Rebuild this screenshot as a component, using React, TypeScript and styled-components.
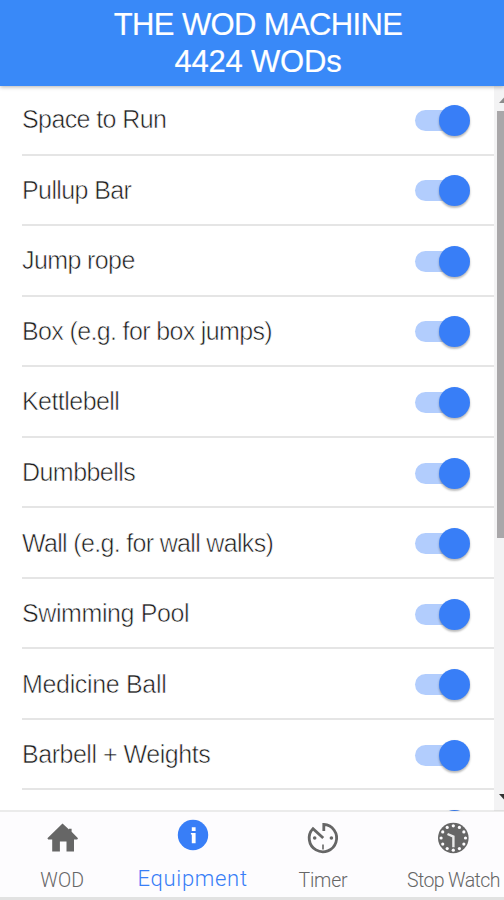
import React from "react";
import styled, { createGlobalStyle } from "styled-components";

const GlobalStyle = createGlobalStyle`
  * { box-sizing: border-box; }
  body { margin: 0; background: #fff; overflow: hidden; }
`;

const Screen = styled.div`
  display: flex;
  flex-direction: column;
  width: 504px;
  height: 900px;
  overflow: hidden;
  background: #fff;
  font-family: "Liberation Sans", Arial, sans-serif;
`;

const Header = styled.header`
  flex: none;
  height: 86px;
  padding: 6px 0 0 12px;
  background: #3989f8;
  color: #fff;
  box-shadow: 0 1px 4px rgba(0, 0, 0, 0.3);
  z-index: 1;
  display: flex;
  flex-direction: column;
  align-items: center;
`;

const TitleLine = styled.div<{ $spacing: number }>`
  font-size: 31px;
  line-height: 37px;
  white-space: nowrap;
  letter-spacing: ${(p) => p.$spacing}px;
  -webkit-text-stroke: 0.2px #fff;
`;

const Content = styled.main`
  flex: none;
  height: 725px;
  display: flex;
  overflow: hidden;
`;

const List = styled.ul`
  flex: none;
  list-style: none;
  width: 494px;
  margin: -1px 0 0;
  padding: 0 0 0 22px;
`;

const Row = styled.li`
  height: 70.55px;
  display: flex;
  align-items: center;
  justify-content: space-between;
  padding: 0 24px 0 0;
  border-bottom: 2px solid #e5e5e5;
`;

const Label = styled.span<{ $spacing: number }>`
  font-size: 25px;
  line-height: 30px;
  color: #1c1c1c;
  -webkit-text-stroke: 0.55px #fff;
  white-space: nowrap;
  letter-spacing: ${(p) => p.$spacing}px;
`;

const Track = styled.span`
  width: 55px;
  height: 21px;
  margin-top: 2px;
  display: flex;
  align-items: center;
  justify-content: flex-end;
  border-radius: 11px;
  background: linear-gradient(90deg, #b2cdfd 44px, transparent 44px);
`;

const Thumb = styled.span`
  flex: none;
  width: 31px;
  height: 31px;
  border-radius: 50%;
  background: #387ef7;
  box-shadow: 0 2px 2px rgba(0, 0, 0, 0.2), 0 1px 3px rgba(0, 0, 0, 0.12);
`;

const ScrollBar = styled.div`
  width: 18px;
  flex: none;
  display: flex;
  flex-direction: column;
  justify-content: space-between;
  background: #f3f3f4;
`;

const ScrollTop = styled.div`
  display: flex;
  flex-direction: column;
  padding: 11px 0 0 3px;
`;

const Arrow = styled.svg`
  display: block;
  width: 15px;
  height: 6px;
`;

const ScrollThumb = styled.div`
  width: 15px;
  height: 427px;
  margin-top: 8px;
  background: #a9a7a9;
`;

const ScrollBottom = styled.div`
  padding: 0 0 11px 3px;
`;

const TabBar = styled.nav`
  flex: none;
  height: 90px;
  margin-top: -1px;
  display: flex;
  background: #fdfcfe;
  background-clip: padding-box;
  border-top: 2px solid rgba(0, 0, 0, 0.08);
  border-bottom: 3px solid #e2e2e2;
`;

const Tab = styled.a<{ $active?: boolean }>`
  flex: none;
  width: 130.4px;
  display: flex;
  flex-direction: column;
  align-items: center;
  color: ${(p) => (p.$active ? "#387ef7" : "#666")};
  padding-top: ${(p) => (p.$active ? 6 : 9)}px;
  &:first-child { margin-left: -3px; }
`;

const TabIcon = styled.svg`
  display: block;
  width: 34px;
  height: 34px;
`;

const TabLabel = styled.span<{ $active?: boolean; $spacing: number }>`
  margin-top: ${(p) => (p.$active ? 14 : 13)}px;
  font-family: Roboto, sans-serif;
  font-weight: 300;
  font-size: ${(p) => (p.$active ? 22 : 19.5)}px;
  line-height: 26px;
  white-space: nowrap;
  color: ${(p) => (p.$active ? "#387ef7" : "#666")};
  letter-spacing: ${(p) => p.$spacing}px;
`;

const equipment: [string, number][] = [
  ["Space to Run", -0.6],
  ["Pullup Bar", -0.6],
  ["Jump rope", -0.6],
  ["Box (e.g. for box jumps)", -0.64],
  ["Kettlebell", -0.55],
  ["Dumbbells", -0.55],
  ["Wall (e.g. for wall walks)", -0.67],
  ["Swimming Pool", -0.4],
  ["Medicine Ball", -0.33],
  ["Barbell + Weights", -0.47],
  ["", 0],
];

const dial = (radius: number) =>
  Array.from({ length: 12 }, (_, i) => ({
    x: 17 + radius * Math.sin((i * Math.PI) / 6),
    y: 17 - radius * Math.cos((i * Math.PI) / 6),
  }));

const HomeIcon = () => (
  <TabIcon viewBox="0 0 34 34">
    <path
      d="M17.5 2.6 24 8.4V7.8h2.6v3L33 17.2l-.8 1.2H29V30.4h-7.5V20.4h-6.6v10H7.2v-12H3.2l-.8-1.2Z"
      fill="currentColor"
    />
  </TabIcon>
);

const InfoIcon = () => (
  <TabIcon viewBox="0 0 34 34">
    <circle cx="17" cy="17" r="15.2" fill="currentColor" />
    <path d="M15.8 9.2h3.8v3.9h-3.8zM14.9 15h4.7v10.2h-3.8v-8.6h-.9z" fill="#fff" />
  </TabIcon>
);

const TimerIcon = () => (
  <TabIcon viewBox="0 0 34 34">
    <path
      d="M17.8 10V3.4A13.7 13.7 0 1 1 7 7.6L17.2 17"
      fill="none"
      stroke="currentColor"
      strokeWidth="2.8"
      strokeLinejoin="miter"
    />
    <path d="M17 23.5v5" stroke="currentColor" strokeWidth="1.6" />
    <circle cx="8.7" cy="17" r="1.8" fill="currentColor" />
    <circle cx="25.4" cy="17" r="1.8" fill="currentColor" />
  </TabIcon>
);

const ClockIcon = () => (
  <TabIcon viewBox="0 0 34 34">
    <circle cx="17.3" cy="17" r="15.3" fill="currentColor" />
    {dial(12.2).map((p, i) => (
      <circle key={i} cx={p.x + 0.3} cy={p.y} r="1.6" fill="#fdfcfe" />
    ))}
    <path d="m11.5 13 5.9 2.6v10.6" fill="none" stroke="#e9e9e9" strokeWidth="2.4" />
  </TabIcon>
);

export default function App() {
  return (
    <>
      <GlobalStyle />
      <Screen>
        <Header>
          <TitleLine $spacing={-0.64}>THE WOD MACHINE</TitleLine>
          <TitleLine $spacing={-0.2}>4424 WODs</TitleLine>
        </Header>
        <Content>
          <List>
            {equipment.map(([name, spacing], i) => (
              <Row key={i}>
                <Label $spacing={spacing}>{name}</Label>
                <Track>
                  <Thumb />
                </Track>
              </Row>
            ))}
          </List>
          <ScrollBar>
            <ScrollTop>
              <Arrow viewBox="0 0 15 6"><path d="M2 6 7.5 0 13 6z" fill="#8b8b8b" /></Arrow>
              <ScrollThumb />
            </ScrollTop>
            <ScrollBottom>
              <Arrow viewBox="0 0 15 6"><path d="M2 0h11L7.5 6z" fill="#333" /></Arrow>
            </ScrollBottom>
          </ScrollBar>
        </Content>
        <TabBar>
          <Tab>
            <HomeIcon />
            <TabLabel $spacing={0.1}>WOD</TabLabel>
          </Tab>
          <Tab $active>
            <InfoIcon />
            <TabLabel $active $spacing={0.7}>Equipment</TabLabel>
          </Tab>
          <Tab>
            <TimerIcon />
            <TabLabel $spacing={-0.2}>Timer</TabLabel>
          </Tab>
          <Tab>
            <ClockIcon />
            <TabLabel $spacing={-0.6}>Stop Watch</TabLabel>
          </Tab>
        </TabBar>
      </Screen>
    </>
  );
}
